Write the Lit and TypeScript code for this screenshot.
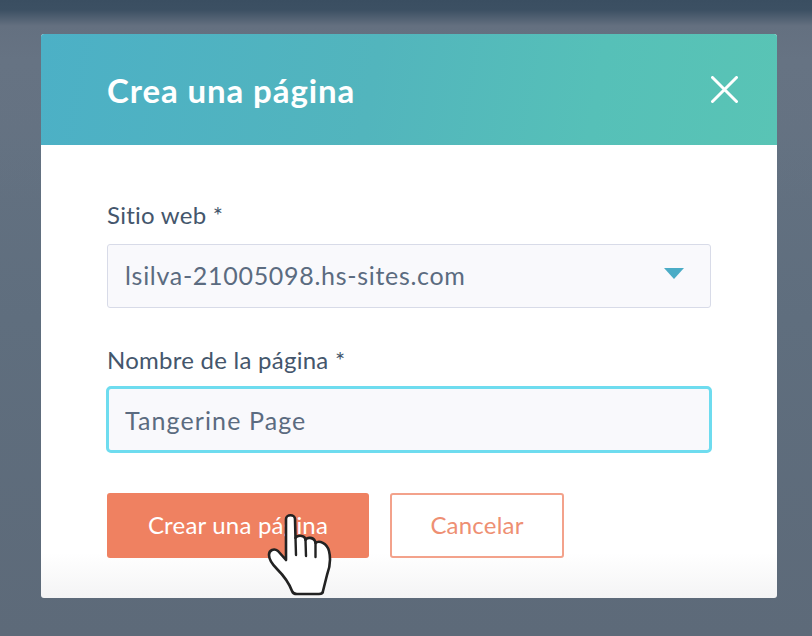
import { LitElement, html, css } from "lit";
import { customElement } from "lit/decorators.js";

@customElement("app-root")
export class AppRoot extends LitElement {
  static styles = css`
    :host {
      display: block;
      width: 812px;
      height: 636px;
      box-sizing: border-box;
      padding: 34px 35px 38px 41px;
      overflow: hidden;
      font-family: Lato, "Liberation Sans", sans-serif;
      background:
        linear-gradient(180deg, #3a4e61 0, #3c5063 10px, #647080 26px, #667383 60px, rgba(102,115,131,0) 200px),
        linear-gradient(180deg, #667383 0, #5f6e7e 50%, #5d6a79 100%);
    }
    .dialog {
      position: relative;
      height: 100%;
      border-radius: 3px;
      background: linear-gradient(180deg, #fff 0, #fff 92%, #f4f4f5 100%);
      display: flex;
      flex-direction: column;
    }
    .head {
      height: 111px;
      flex: none;
      box-sizing: border-box;
      padding: 0 39px 0 66px;
      display: flex;
      align-items: center;
      justify-content: space-between;
      border-radius: 3px 3px 0 0;
      background: linear-gradient(100deg, #4cb0c6 0%, #52b5bd 45%, #56c0b8 75%, #59c4b5 100%);
    }
    .title {
      margin: 0;
      color: #fff;
      font-size: 33px;
      font-weight: 700;
      letter-spacing: 0.9px;
    }
    .close { width: 27px; height: 27px; display: block; }
    .body {
      padding: 57px 65px 0 65px;
      display: flex;
      flex-direction: column;
    }
    .label {
      color: #44566c;
      font-size: 24px;
      letter-spacing: 0.25px;
      line-height: 26px;
      height: 26px;
      margin-bottom: 16px;
      padding-left: 1px;
    }
    .label.second { margin-top: 39px; margin-bottom: 13px; }
    .field {
      box-sizing: border-box;
      display: flex;
      align-items: center;
      justify-content: space-between;
      background: #f9f9fc;
      color: #5b6b80;
      font-size: 25px;
      letter-spacing: 0.7px;
    }
    .select {
      height: 64px;
      margin-left: 1px;
      margin-right: 1px;
      border: 1.5px solid #d8dbe8;
      border-radius: 3px;
      padding: 0 26px 2px 17px;
    }
    .input {
      height: 67px;
      border: 3px solid #6edcef;
      border-radius: 5px;
      padding: 0 17px 0 16px;
      letter-spacing: 1.1px;
    }
    .caret { width: 20px; height: 12px; display: block; margin-top: -2px; }
    .actions {
      display: flex;
      gap: 21px;
      margin-top: 40px;
      padding-left: 1px;
    }
    .btn {
      box-sizing: border-box;
      height: 65px;
      border-radius: 3px;
      display: flex;
      align-items: center;
      justify-content: center;
      padding-bottom: 3px;
      font-size: 24px;
      letter-spacing: 0.2px;
    }
    .primary { width: 262px; background: #ef8161; color: #fff; }
    .secondary { width: 174px; background: #fff; border: 2px solid #f3a28b; color: #ee8f73; }
    .hand {
      position: absolute;
      left: 226px;
      top: 479px;
      width: 66px;
      height: 86px;
    }
  `;

  render() {
    return html`
      <div class="dialog">
        <div class="head">
          <h1 class="title">Crea una página</h1>
          <svg class="close" viewBox="0 0 27 27" aria-label="Cerrar">
            <path d="M1.5 1.5 L25.5 25.5 M25.5 1.5 L1.5 25.5" stroke="#fff" stroke-width="3" stroke-linecap="round" fill="none"/>
          </svg>
        </div>
        <div class="body">
          <div class="label">Sitio web *</div>
          <div class="field select">
            <span>lsilva-21005098.hs-sites.com</span>
            <svg class="caret" viewBox="0 0 20 12"><path d="M0 0 H20 L10 11 Z" fill="#4bacc6"/></svg>
          </div>
          <div class="label second">Nombre de la página *</div>
          <div class="field input"><span>Tangerine Page</span></div>
          <div class="actions">
            <div class="btn primary">Crear una página</div>
            <div class="btn secondary">Cancelar</div>
          </div>
        </div>
        <svg class="hand" viewBox="0 0 66 86">
          <path d="M19 6 C19 1 28 1 28 6 L28.5 25 C30 22 36 22 38 25 L38.5 27 C40 24 46 24 48 28 L48.5 30 C52 27 60 30 62 38 C64 46 63 54 60 62 L56 78 Q56 81 52 81 L30 81 Q26 81 25 78 C22 70 16 62 10 56 C6 52 2 47 2 42 C2 37 7 35 11 38 L19 47 Z"
            fill="#fff" stroke="#222" stroke-width="2.6" stroke-linejoin="round"/>
          <path d="M28.5 25 L29 42 M38.5 27 L39 43 M48.5 30 L48.5 44" stroke="#222" stroke-width="2.4" stroke-linecap="round" fill="none"/>
        </svg>
      </div>
    `;
  }
}
